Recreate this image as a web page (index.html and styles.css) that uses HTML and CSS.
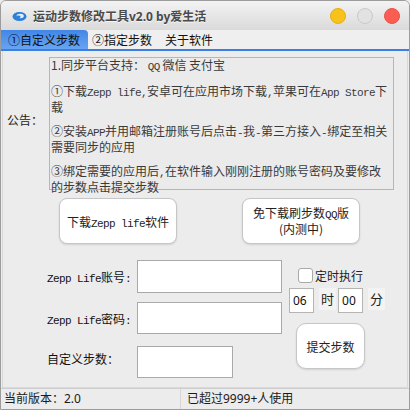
FILE: index.html
```html
<!DOCTYPE html>
<html lang="zh-CN">
<head>
  <meta charset="UTF-8">
  <title>运动步数修改工具</title>
  <link rel="stylesheet" href="styles.css">
</head>
<body>
  <div class="window">
    <div class="titlebar">
      <svg class="app-icon" width="17" height="11" viewBox="0 0 17 11">
        <ellipse cx="8.5" cy="5.5" rx="7" ry="4.6" fill="#2e7fd8"/>
        <ellipse cx="9.2" cy="5" rx="3.6" ry="2.2" fill="#e4eefa"/>
        <ellipse cx="7.4" cy="5.8" rx="2.2" ry="1.4" fill="#2e7fd8"/>
      </svg>
      <span class="title">运动步数修改工具v2.0 by爱生活</span>
      <div class="lights">
        <span class="light yellow"></span>
        <span class="light gray"></span>
        <span class="light red"></span>
      </div>
    </div>

    <div class="tabs">
      <div class="tab active">①自定义步数</div>
      <div class="tab second">②指定步数</div>
      <div class="tab third">关于软件</div>
    </div>

    <div class="content">
      <div class="notice-row">
        <div class="notice-label">公告：</div>
        <div class="notice">
          <p>1.同步平台支持： <span class="en">QQ</span> 微信 支付宝</p>
          <p>①下载<span class="en">Zepp life,</span>安卓可在应用市场下载<span class="en">,</span>苹果可在<span class="en">App Store</span>下<br>载</p>
          <p>②安装<span class="en">APP</span>并用邮箱注册账号后点击<span class="en">-</span>我<span class="en">-</span>第三方接入<span class="en">-</span>绑定至相关<br>需要同步的应用</p>
          <p>③绑定需要的应用后<span class="en">,</span>在软件输入刚刚注册的账号密码及要修改<br>的步数点击提交步数</p>
        </div>
      </div>

      <div class="button-row">
        <button class="btn big">下载<span class="en">Zepp life</span>软件</button>
        <button class="btn big two-line">免下载刷步数<span class="en">QQ</span>版<br>(内测中)</button>
      </div>

      <div class="form">
        <div class="fields">
          <div class="field">
            <label class="field-label"><span class="en">Zepp Life</span>账号<span class="en">:</span></label>
            <input type="text" class="text-input wide">
          </div>
          <div class="field second-row">
            <label class="field-label"><span class="en">Zepp Life</span>密码<span class="en">:</span></label>
            <input type="text" class="text-input wide">
          </div>
          <div class="field third-row">
            <label class="field-label ui">自定义步数：</label>
            <input type="text" class="text-input narrow">
          </div>
        </div>

        <div class="side">
          <label class="timer-check">
            <input type="checkbox" class="check">
            <span>定时执行</span>
          </label>
          <div class="time-row">
            <input type="text" class="time-input" value="06">
            <span class="unit">时</span>
            <input type="text" class="time-input" value="00">
            <span class="unit">分</span>
          </div>
          <button class="btn submit">提交步数</button>
        </div>
      </div>
    </div>

    <div class="statusbar">
      <div class="status-cell version">当前版本：2.0</div>
      <div class="status-cell users">已超过9999+人使用</div>
    </div>
  </div>
</body>
</html>
```

FILE: styles.css
```css
/* General body and window frame */
body {
  margin: 0;
  padding: 0;
  font-family: "Noto Sans", "Noto Sans CJK SC", sans-serif;
  font-size: 12px;
  color: #222;
  background: #ececec;
}

.window {
  width: 410px;
  height: 410px;
  box-sizing: border-box;
  border: 1px solid #9c9c9c;
  border-radius: 6px 6px 0 0;
  background-color: #ececec;
  display: flex;
  flex-direction: column;
  overflow: hidden;
}

/* Latin text drawn in the old monospace style */
.en {
  font-family: "Liberation Mono", monospace;
  font-size: 11px;
  letter-spacing: -0.6px;
}

/* Title bar */
.titlebar {
  height: 29px;
  flex-shrink: 0;
  display: flex;
  align-items: center;
  padding: 0 9px 0 10px;
  background: linear-gradient(to bottom, #f3f3f3, #dadada);
}

.app-icon {
  margin-right: 5px;
  margin-top: 2px;
}

.title {
  font-family: "Noto Sans", "Noto Sans CJK SC", sans-serif;
  font-weight: bold;
  font-size: 12px;
  color: #4a4a4a;
  text-shadow: 0 1px 0 rgba(255, 255, 255, 0.7);
}

.lights {
  margin-left: auto;
  display: flex;
  gap: 11px;
}

.light {
  width: 16px;
  height: 16px;
  border-radius: 50%;
  box-sizing: border-box;
}

.light.yellow {
  background-color: #f8c21c;
  border: 1px solid #e8ae12;
}

.light.gray {
  background-color: #e2e2e2;
  border: 1px solid #c9c9c9;
}

.light.red {
  background-color: #fb5d52;
  border: 1px solid #ee4f45;
}

/* Tabs */
.tabs {
  height: 19px;
  flex-shrink: 0;
  display: flex;
  background-color: #efefef;
  border-bottom: 2px solid #3b7fe2;
}

.tab {
  font-family: "Noto Sans CJK SC", sans-serif;
  line-height: 20px;
  color: #111;
  padding: 0 6px;
}

.tab.active {
  padding: 0 8px 0 7px;
  background: linear-gradient(to bottom, #4287e6, #67a4f2);
  border-radius: 0 4px 0 0;
}

.tab.second {
  padding-left: 4px;
}

.tab.third {
  padding-left: 7px;
}

/* Main content panel */
.content {
  flex: 1;
  margin: 0 1px;
  border: 1px solid #d8d8d8;
  border-top: none;
  padding: 6px 0 0 4px;
  font-family: "Noto Sans CJK SC", sans-serif;
}

.notice-row {
  display: flex;
  align-items: center;
}

.notice-label {
  width: 42px;
  font-size: 12px;
  margin-top: -9px;
}

.notice {
  width: 345px;
  height: 133px;
  box-sizing: border-box;
  border: 1px solid #b6b6b6;
  background-color: #ebebeb;
  padding: 0 0 0 1px;
  color: #3a3a3a;
  line-height: 13px;
  white-space: nowrap;
}

.notice p {
  margin: 0 0 11px 0;
}

.notice p:first-child {
  margin-bottom: 10px;
}

/* Big buttons */
.button-row {
  display: flex;
  gap: 65px;
  margin: 8px 0 0 52px;
}

.btn {
  font-family: "Noto Sans CJK SC", sans-serif;
  font-size: 12px;
  color: #222;
  background-color: #fff;
  border: 1px solid #c6c6c6;
  border-radius: 8px;
  box-shadow: 0 1px 2px rgba(0, 0, 0, 0.12);
  padding: 0;
  cursor: pointer;
}

.btn.big {
  width: 118px;
  height: 46px;
}

.btn.two-line {
  line-height: 13px;
  padding-bottom: 2px;
}

/* Account form */
.form {
  display: flex;
  margin: 16px 0 0 40px;
}

.field {
  display: flex;
  align-items: center;
}

.field.second-row {
  margin-top: 9px;
}

.field.third-row {
  margin-top: 12px;
}

.field-label {
  width: 90px;
  font-size: 12px;
  color: #111;
}

.field-label.ui {
  margin-top: -7px;
}

.text-input {
  box-sizing: border-box;
  border: 1px solid #a9a9a9;
  background-color: #fff;
  outline: none;
  margin: 0;
  font-size: 12px;
}

.text-input.wide {
  width: 145px;
  height: 33px;
}

.second-row .text-input.wide {
  height: 32px;
}

.text-input.narrow {
  width: 96px;
  height: 32px;
}

/* Right side: timer and submit */
.side {
  margin-left: 7px;
  padding-top: 5px;
  display: flex;
  flex-direction: column;
  align-items: flex-start;
}

.timer-check {
  height: 20px;
  display: flex;
  align-items: center;
  margin-left: 9px;
  font-size: 12px;
  color: #222;
}

.check {
  appearance: none;
  width: 15px;
  height: 15px;
  margin: 0 2px 0 0;
  box-sizing: border-box;
  border: 1px solid #a9a9a9;
  border-radius: 3px;
  background-color: #fff;
}

.time-row {
  display: flex;
  align-items: center;
  margin-top: 3px;
}

.time-input {
  width: 25px;
  height: 25px;
  box-sizing: border-box;
  border: 1px solid #b4b4b4;
  background-color: #fff;
  padding: 0 0 0 3px;
  margin: 0;
  outline: none;
  font-family: "Noto Sans", sans-serif;
  font-size: 12px;
  color: #111;
}

.unit {
  height: 22px;
  line-height: 22px;
  margin: 0 2px 0 5px;
  padding: 0 2px;
  background-color: #f3f3f3;
  font-size: 13px;
  align-self: flex-start;
}

.btn.submit {
  width: 69px;
  height: 46px;
  margin: 10px 0 0 7px;
  border-radius: 10px;
}

/* Status bar */
.statusbar {
  height: 20px;
  flex-shrink: 0;
  display: flex;
  border-top: 1px solid #cfcfcf;
  background-color: #ececec;
  line-height: 20px;
  font-size: 12px;
  color: #1a1a1a;
}

.status-cell.version {
  width: 176px;
  padding-left: 3px;
  border-right: 1px solid #d6d6d6;
}

.status-cell.users {
  padding-left: 6px;
}
```
